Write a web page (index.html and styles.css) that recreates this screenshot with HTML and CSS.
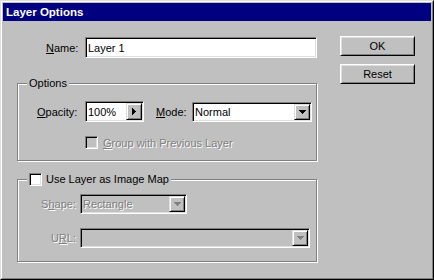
FILE: index.html
```html
<!DOCTYPE html>
<html lang="en">
<head>
    <meta charset="UTF-8">
    <title>Layer Options</title>
    <link rel="stylesheet" href="styles.css">
</head>
<body>

<div class="window">
    <div class="frame">
        <div class="titlebar">Layer Options</div>

        <div class="content">
            <!-- Left: fields and groups -->
            <div class="main">
                <div class="row name-row">
                    <span class="lbl name-lbl"><u>N</u>ame:</span>
                    <div class="field name-field"><span class="value">Layer 1</span></div>
                </div>

                <fieldset class="group options">
                    <legend><span>Options</span></legend>
                    <div class="row opacity-row">
                        <span class="lbl opacity-lbl"><u>O</u>pacity:</span>
                        <div class="field opacity-field">
                            <span class="value">100%</span>
                            <span class="arrow-btn">
                                <svg width="4" height="7" viewBox="0 0 4 7"><path d="M0 0h1v7H0zM1 1h1v5H1zM2 2h1v3H2zM3 3h1v1H3z" fill="#000"/></svg>
                            </span>
                        </div>
                        <span class="lbl mode-lbl"><u>M</u>ode:</span>
                        <div class="field mode-field">
                            <span class="value">Normal</span>
                            <span class="arrow-btn">
                                <svg width="7" height="4" viewBox="0 0 7 4"><path d="M0 0h7v1H0zM1 1h5v1H1zM2 2h3v1H2zM3 3h1v1H3z" fill="#000"/></svg>
                            </span>
                        </div>
                    </div>
                    <div class="row check-row">
                        <span class="checkbox off"></span>
                        <span class="disabled"><u>G</u>roup with Previous Layer</span>
                    </div>
                </fieldset>

                <fieldset class="group imagemap">
                    <legend>
                        <span class="checkbox"></span>
                        <span class="legend-text">Use Layer as Image Map</span>
                    </legend>
                    <div class="row shape-row">
                        <span class="lbl side-lbl disabled">S<u>h</u>ape:</span>
                        <div class="field off shape-field">
                            <span class="value disabled">Rectangle</span>
                            <span class="arrow-btn">
                                <svg width="7" height="4" viewBox="0 0 7 4"><path d="M0 0h7v1H0zM1 1h5v1H1zM2 2h3v1H2zM3 3h1v1H3z" fill="#808080"/></svg>
                            </span>
                        </div>
                    </div>
                    <div class="row url-row">
                        <span class="lbl side-lbl disabled">U<u>R</u>L:</span>
                        <div class="field off url-field">
                            <span class="value"></span>
                            <span class="arrow-btn">
                                <svg width="7" height="4" viewBox="0 0 7 4"><path d="M0 0h7v1H0zM1 1h5v1H1zM2 2h3v1H2zM3 3h1v1H3z" fill="#808080"/></svg>
                            </span>
                        </div>
                    </div>
                </fieldset>
            </div>

            <!-- Right: dialog buttons -->
            <div class="actions">
                <button class="btn">OK</button>
                <button class="btn">Reset</button>
            </div>
        </div>
    </div>
</div>

</body>
</html>
```

FILE: styles.css
```css
* {
    box-sizing: border-box;
    margin: 0;
    padding: 0;
}

body {
    font-family: 'Liberation Sans', Arial, sans-serif;
    font-size: 11px;
    color: #000;
    background: #c0c0c0;
}

/* Window frame */
.window {
    width: 434px;
    height: 280px;
    background: #c0c0c0;
    border: 1px solid;
    border-color: #dfdfdf #000 #000 #dfdfdf;
}

.frame {
    height: 100%;
    padding: 1px;
    border: 1px solid;
    border-color: #fff #808080 #808080 #fff;
}

.titlebar {
    height: 18px;
    line-height: 18px;
    padding-left: 3px;
    background: #000080;
    color: #fff;
    font-weight: bold;
    font-size: 11.5px;
}

.content {
    display: flex;
    padding-left: 14px;
}

.main {
    width: 300px;
    padding-top: 16px;
}

.row {
    display: flex;
    align-items: center;
}

.lbl {
    white-space: nowrap;
}

.disabled {
    color: #808080;
    text-shadow: 1px 1px #fff;
}

/* Sunken fields */
.field {
    display: flex;
    padding: 1px;
    border: 1px solid;
    border-color: #808080 #fff #fff #808080;
    box-shadow: inset 1px 1px #000, inset -1px -1px #dfdfdf;
    background: #fff;
}

.field.off {
    background: #c0c0c0;
}

.field .value {
    flex: 1;
    padding-left: 1px;
    display: flex;
    align-items: center;
    white-space: nowrap;
    overflow: hidden;
}

.arrow-btn {
    width: 16px;
    display: flex;
    align-items: center;
    justify-content: center;
    background: #c0c0c0;
    border: 1px solid;
    border-color: #dfdfdf #000 #000 #dfdfdf;
    box-shadow: inset 1px 1px #fff, inset -1px -1px #808080;
}

.arrow-btn svg {
    display: block;
}

/* Name row */
.name-row {
    height: 21px;
    padding-left: 29px;
    margin-bottom: 19px;
}

.name-lbl {
    width: 39px;
}

.name-field {
    width: 232px;
    height: 21px;
}

/* Group boxes */
.group {
    margin: 0;
    padding: 0;
    min-inline-size: 0;
    border: 1px solid #808080;
    box-shadow: inset 1px 1px #fff, 1px 1px #fff;
}

.group legend {
    display: flex;
    align-items: center;
    height: 13px;
    line-height: 13px;
    margin-left: 9px;
    padding: 0 2px;
    background: #c0c0c0;
}

.options {
    padding-top: 11px;
    padding-bottom: 11px;
}

.opacity-row {
    height: 21px;
    padding-left: 19px;
}

.opacity-lbl {
    width: 48px;
}

.opacity-field {
    width: 59px;
    height: 21px;
}

.mode-lbl {
    width: 36px;
    margin-left: 12px;
}

.mode-field {
    width: 120px;
    height: 20px;
}

.check-row {
    height: 13px;
    margin-top: 14px;
    padding-left: 67px;
}

.check-row .checkbox {
    margin-right: 5px;
}

/* Checkboxes */
.checkbox {
    width: 13px;
    height: 13px;
    flex: none;
    background: #fff;
    border: 1px solid;
    border-color: #808080 #fff #fff #808080;
    box-shadow: inset 1px 1px #000, inset -1px -1px #dfdfdf;
}

.checkbox.off {
    background: #c0c0c0;
}

.legend-text {
    margin-left: 4px;
}

/* Image map group */
.imagemap {
    margin-top: 12px;
    padding-top: 8px;
    padding-bottom: 13px;
}

.shape-row,
.url-row {
    height: 20px;
    padding-left: 18px;
}

.url-row {
    margin-top: 14px;
}

.side-lbl {
    width: 40px;
    margin-right: 4px;
    text-align: right;
}

.shape-field {
    width: 107px;
    height: 20px;
}

.url-field {
    width: 230px;
    height: 20px;
}

/* Dialog buttons */
.actions {
    margin-left: 23px;
    padding-top: 15px;
    display: flex;
    flex-direction: column;
    gap: 8px;
}

.btn {
    width: 75px;
    height: 20px;
    font-family: inherit;
    font-size: 11px;
    color: #000;
    background: #c0c0c0;
    border: 1px solid;
    border-color: #fff #000 #000 #fff;
    box-shadow: inset 1px 1px #dfdfdf, inset -1px -1px #808080;
}
```
